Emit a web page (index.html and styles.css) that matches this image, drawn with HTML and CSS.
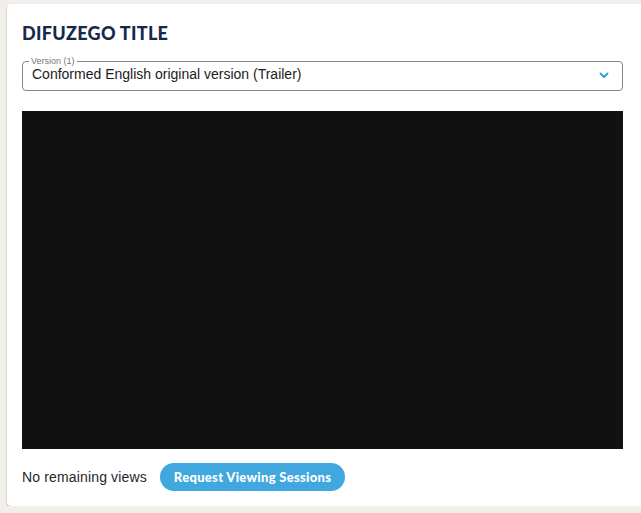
FILE: index.html
```html
<!DOCTYPE html>
<html lang="en">

<head>
    <meta charset="UTF-8">
    <meta name="viewport" content="width=device-width, initial-scale=1.0">
    <title>Difuzego Title</title>
    <link rel="stylesheet" href="styles.css">
</head>

<body>
    <div class="card">
        <h1 class="title">DIFUZEGO TITLE</h1>
        <div class="version-select">
            <span class="select-label">Version (1)</span>
            <span class="select-value">Conformed English original version (Trailer)</span>
            <svg class="chevron" width="10" height="7" viewBox="0 0 10 7">
                <path d="M1.5 1.5 L5 5 L8.5 1.5" fill="none" stroke="#3a9fd8" stroke-width="2" stroke-linecap="round" stroke-linejoin="round"/>
            </svg>
        </div>
        <div class="player"></div>
        <div class="views-row">
            <span class="views-text">No remaining views</span>
            <button class="request-button">Request Viewing Sessions</button>
        </div>
    </div>
</body>

</html>
```

FILE: styles.css
```css
body {
    margin: 0;
    padding: 4px 0 0 7px;
    background-color: #f2efea;
    font-family: "Liberation Sans", Arial, sans-serif;
    overflow: hidden;
}

.card {
    width: 601px;
    padding: 15px 40px 15px 15px;
    background-color: #fff;
    border-radius: 4px;
    box-shadow: 0 1px 2px rgba(0, 0, 0, 0.35);
}

.title {
    margin: 3px 0 17px 0;
    font-family: Lato, sans-serif;
    font-weight: 900;
    font-size: 18px;
    line-height: 22px;
    letter-spacing: 0.3px;
    color: #14294b;
}

.version-select {
    position: relative;
    display: flex;
    align-items: flex-start;
    justify-content: space-between;
    height: 30px;
    padding: 4px 13px 0 9px;
    box-sizing: border-box;
    border: 1px solid #8c877d;
    border-radius: 4px;
}

.select-label {
    position: absolute;
    top: -6px;
    left: 6px;
    padding: 0 2px;
    background-color: #fff;
    font-size: 9px;
    line-height: 10px;
    color: #7a7670;
}

.select-value {
    font-size: 14px;
    line-height: 16px;
    color: #1b1b1b;
}

.chevron {
    display: block;
    margin-top: 6px;
}

.player {
    height: 338px;
    margin-top: 20px;
    background-color: #111;
}

.views-row {
    display: flex;
    align-items: center;
    margin-top: 14px;
}

.views-text {
    font-size: 14px;
    letter-spacing: 0.15px;
    color: #26262e;
    margin-right: 13px;
}

.request-button {
    height: 28px;
    padding: 0 14px;
    font-family: Lato, sans-serif;
    font-weight: 900;
    font-size: 13px;
    letter-spacing: 0.3px;
    color: #fff;
    background-color: #40a8df;
    border: none;
    border-radius: 14px;
    cursor: pointer;
}
```
